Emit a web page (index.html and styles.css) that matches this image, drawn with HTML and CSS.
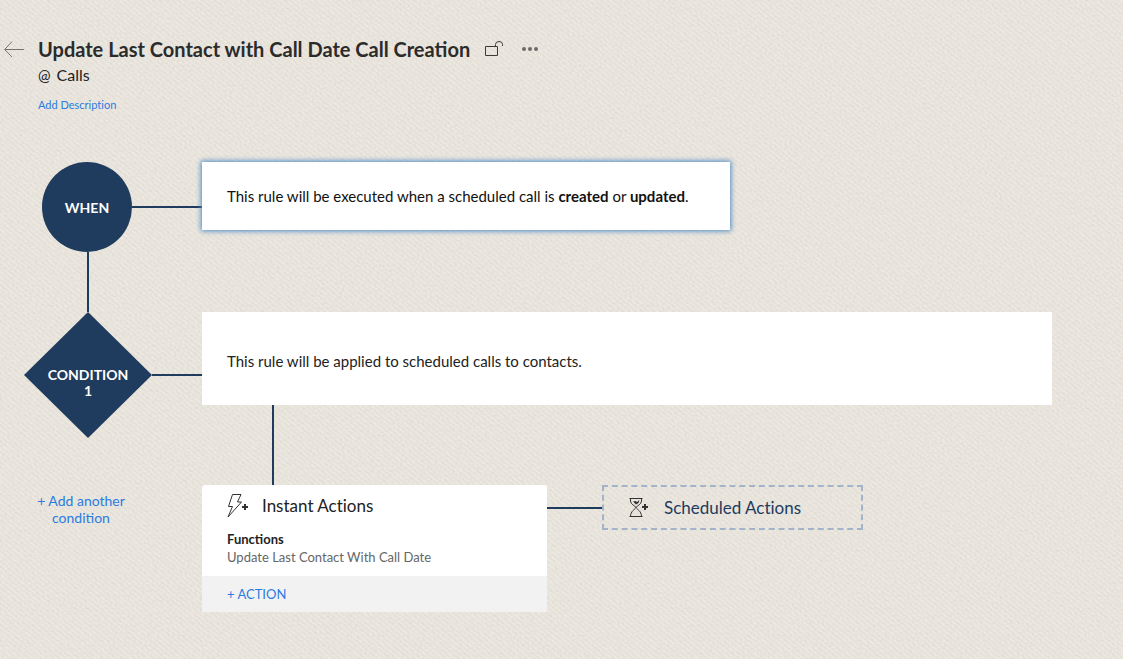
FILE: index.html
```html
<!DOCTYPE html>
<html lang="en">
<head>
<meta charset="utf-8">
<meta name="viewport" content="width=device-width, initial-scale=1">
<title>Workflow rule</title>
<link rel="stylesheet" href="styles.css">
</head>
<body>
<header class="header">
  <a class="back" href="#" aria-label="Back">
    <svg width="20" height="16" viewBox="0 0 20 16" fill="none" stroke="#77736f"><path d="M20 8.5H.7M8 .5L.7 8.5 8 16"/></svg>
  </a>
  <div class="heading">
    <div class="title-row">
      <h1 class="title">Update Last Contact with Call Date Call Creation</h1>
      <button class="icon-btn lock" type="button" aria-label="Unlock">
        <svg width="19" height="16" viewBox="0 0 19 16" fill="none" stroke="#3c3a38"><path d="M.5 5.500h12v9H.5zM10.500 5.500V3.500Q10.500.5 14 .5T17.500 3.500V5"/></svg>
      </button>
      <button class="icon-btn" type="button" aria-label="More">
        <svg width="16" height="4" viewBox="0 0 16 4" fill="#6c6a68"><circle cx="2" cy="2" r="2"/><circle cx="8" cy="2" r="2"/><circle cx="14" cy="2" r="2"/></svg>
      </button>
    </div>
    <p class="module"><span class="at">@</span><span>Calls</span></p>
    <a class="describe" href="#">Add Description</a>
  </div>
</header>
<main class="flow">
  <div class="rail">
    <div class="node-row node-row-when"><div class="when">WHEN</div><i class="line"></i></div>
    <i class="stem stem-when"></i>
  </div>
  <section class="card trigger"><p>This rule will be executed when a scheduled call is <b>created</b> or <b>updated</b>.</p></section>

  <div class="rail">
    <div class="node-row"><div class="condition">CONDITION<br>1</div><i class="line"></i></div>
  </div>
  <div class="criteria-cell">
    <section class="card criteria"><p>This rule will be applied to scheduled calls to contacts.</p></section>
    <i class="stem stem-actions"></i>
  </div>

  <div class="rail"><a class="add-condition" href="#">+ Add another condition</a></div>
  <div class="actions">
    <section class="instant">
      <div class="instant-body">
        <h2 class="action-title">
          <svg width="22" height="24" viewBox="0 0 22 24" fill="none" stroke="#333"><path d="M5.500.5H14L10.500 8H14.500L1 23 5.500 12.500H1.500z"/><path d="M15 13h6M18 10v6" stroke-width="2"/></svg>
          <span>Instant Actions</span>
        </h2>
        <h3 class="kind">Functions</h3>
        <p class="function">Update Last Contact With Call Date</p>
      </div>
      <button class="add-action" type="button">+ ACTION</button>
    </section>
    <i class="link"></i>
    <button class="scheduled" type="button">
      <svg width="20" height="20" viewBox="0 0 20 20" fill="none" stroke="#333"><path d="M.5.5h13M.5 18.500h13M1.500.5V3C1.500 6.500 6 7.500 7 9.500 8 11.500 12.500 13 12.500 18.500M12.500.5V3C12.500 6.500 8 7.500 7 9.500 6 11.500 1.500 13 1.500 18.500"/><path d="M4 3.500L6.500 3 8 4 10.500 2 9.500 5 7 6.500z" fill="#333" stroke="none"/><path d="M13 9h6M16 6v6" stroke-width="2"/></svg>
      <span>Scheduled Actions</span>
    </button>
  </div>
</main>
</body>
</html>
```
FILE: styles.css
```css
* { box-sizing: border-box; }
body {
  margin: 0;
  min-height: 100vh;
  background-color: #e9e5dd;
  background-image:
    url("data:image/svg+xml,%3Csvg xmlns='http://www.w3.org/2000/svg' width='200' height='200'%3E%3Cfilter id='n'%3E%3CfeTurbulence type='fractalNoise' baseFrequency='.4' numOctaves='2' stitchTiles='stitch'/%3E%3CfeColorMatrix values='0 0 0 0 .4 0 0 0 0 .36 0 0 0 0 .3 .28 0 0 0 -.11'/%3E%3C/filter%3E%3Crect width='200' height='200' filter='url(%23n)'/%3E%3C/svg%3E"),
    repeating-linear-gradient(40deg, rgba(255, 255, 255, .14) 0 2px, rgba(140, 130, 110, .01) 2px 4px);
  font-family: Lato, "Liberation Sans", sans-serif;
  font-size: 15px;
  line-height: 20px;
  color: #111;
}
h1, h2, h3, p { margin: 0; }
a { color: #2c7be0; text-decoration: none; }
button { font: inherit; border: 0; background: none; padding: 0; cursor: pointer; }
svg { display: block; flex: none; }

.header { display: flex; gap: 14px; padding: 37px 24px 0 4px; }
.back { padding-top: 4px; }
.title-row { display: flex; align-items: center; }
.title { font-size: 20px; line-height: 24px; font-weight: 700; color: #2b2b2b; }
.icon-btn { margin-left: 18px; }
.lock { margin-left: 15px; }
.module { display: flex; gap: 6px; margin-top: 4px; font-size: 16px; color: #222; }
.at { font-size: 15px; }
.describe { display: block; margin-top: 12px; font-size: 11px; line-height: 16px; font-variant-ligatures: none; }

.flow {
  display: grid;
  grid-template-columns: 178px minmax(0, 850px);
  padding: 49px 24px 24px;
}
.node-row { display: flex; align-items: center; }
.node-row-when { padding-left: 18px; }
.line { flex: 1; height: 2px; background: #1f3b5d; }
.stem { display: block; width: 2px; background: #1f3b5d; }
.stem-when { height: 60px; margin-left: 63px; }
.stem-actions { height: 80px; margin-left: 70px; }
.when {
  display: flex;
  align-items: center;
  justify-content: center;
  width: 90px;
  height: 90px;
  padding-top: 2px;
  border-radius: 50%;
  background: #1f3b5d;
  color: #fff;
  font-size: 14px;
  font-weight: 700;
}
.condition {
  width: 128px;
  height: 126px;
  padding-top: 55px;
  clip-path: polygon(50% 0, 100% 50%, 50% 100%, 0 50%);
  background: #1f3b5d;
  color: #fff;
  font-size: 14px;
  font-weight: 700;
  line-height: 16px;
  text-align: center;
}
.card { background: #fff; padding: 24px 25px; }
.trigger {
  justify-self: start;
  align-self: start;
  width: 100%;
  max-width: 528px;
  box-shadow: 0 0 5px 1px #4a8ac2;
}
.criteria { padding: 39px 25px 34px; color: #222; }

.add-condition {
  display: block;
  width: 114px;
  padding-top: 7px;
  font-size: 14px;
  line-height: 17px;
  text-align: center;
}
.actions { display: flex; align-items: flex-start; }
.instant { flex: 0 1 345px; border-radius: 3px; overflow: hidden; background: #fff; }
.instant-body { padding: 9px 25px 10px; }
.action-title { display: flex; align-items: center; gap: 13px; font-size: 17px; line-height: 24px; font-weight: 400; color: #222; font-variant-ligatures: none; }
.kind { margin-top: 12px; font-size: 13px; line-height: 18px; font-weight: 700; color: #222; }
.function { font-size: 13px; line-height: 18px; color: #666; }
.add-action { display: block; width: 100%; padding: 8px 25px; background: #f2f2f2; color: #2c7be0; font-size: 13px; text-align: left; }
.link { width: 55px; height: 2px; margin-top: 22px; background: #1f3b5d; }
.scheduled {
  display: flex;
  align-items: center;
  gap: 15px;
  flex: 0 1 261px;
  height: 45px;
  padding-left: 25px;
  border: 2px dashed #a3b3ca;
  font-size: 17px;
  color: #1f3b5d;
  font-variant-ligatures: none;
}
```
